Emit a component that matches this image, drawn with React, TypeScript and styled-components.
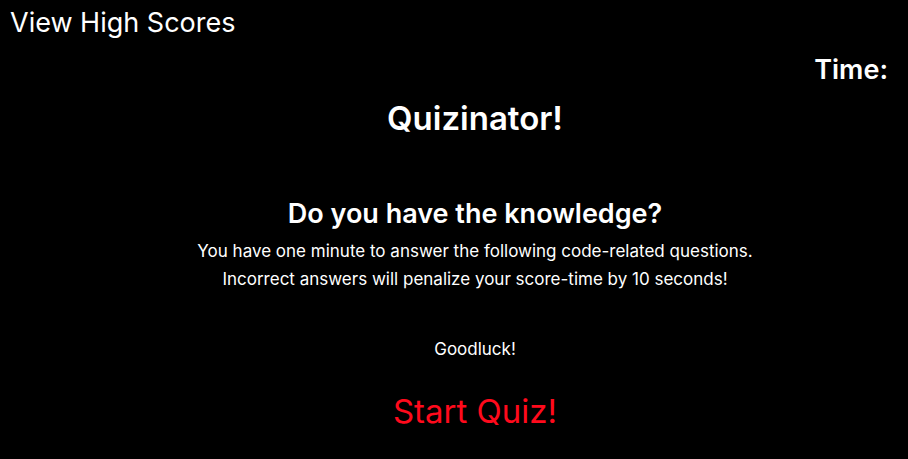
import styled, { createGlobalStyle } from 'styled-components'

const GlobalStyle = createGlobalStyle`
  body {
    margin: 0;
    background: #000;
    color: #fff;
    font-family: Inter, 'Noto Sans', sans-serif;
  }
`

const App = () => {
  return (
    <Page>
      <GlobalStyle />
      <Header>
        <HighScoresLink>View High Scores</HighScoresLink>
      </Header>
      <TimerRow>
        <Timer>Time:</Timer>
      </TimerRow>
      <Main>
        <Title>Quizinator!</Title>
        <Subtitle>Do you have the knowledge?</Subtitle>
        <Intro>
          You have one minute to answer the following code-related questions.
          <br />
          Incorrect answers will penalize your score-time by 10 seconds!
        </Intro>
        <Goodluck>Goodluck!</Goodluck>
        <StartButton>Start Quiz!</StartButton>
      </Main>
    </Page>
  )
}

const Page = styled.div`
  display: flex;
  flex-direction: column;
  min-height: 459px;
`

const Header = styled.header`
  display: flex;
  padding: 8px 0 0 10px;
`

const HighScoresLink = styled.span`
  font-size: 27px;
  line-height: 30px;
  cursor: pointer;
`

const TimerRow = styled.div`
  display: flex;
  justify-content: flex-end;
  padding: 17px 20px 0 0;
`

const Timer = styled.span`
  font-size: 27px;
  font-weight: 600;
  line-height: 30px;
`

const Main = styled.main`
  display: flex;
  flex-direction: column;
  align-items: center;
  padding-left: 42px;
  text-align: center;
`

const Title = styled.h1`
  margin: 13px 0 0;
  font-size: 33px;
  font-weight: 600;
  line-height: 40px;
`

const Subtitle = styled.h2`
  margin: 59px 0 0;
  font-size: 27px;
  font-weight: 600;
  line-height: 34px;
`

const Intro = styled.p`
  margin: 6px 0 0;
  font-size: 17px;
  line-height: 28px;
`

const Goodluck = styled.p`
  margin: 46px 0 0;
  font-size: 17px;
  line-height: 20px;
`

const StartButton = styled.button`
  margin-top: 32px;
  padding: 0;
  border: none;
  background: none;
  color: #ff0a1c;
  font-family: inherit;
  font-size: 33px;
  line-height: 40px;
  cursor: pointer;
`

export default App
